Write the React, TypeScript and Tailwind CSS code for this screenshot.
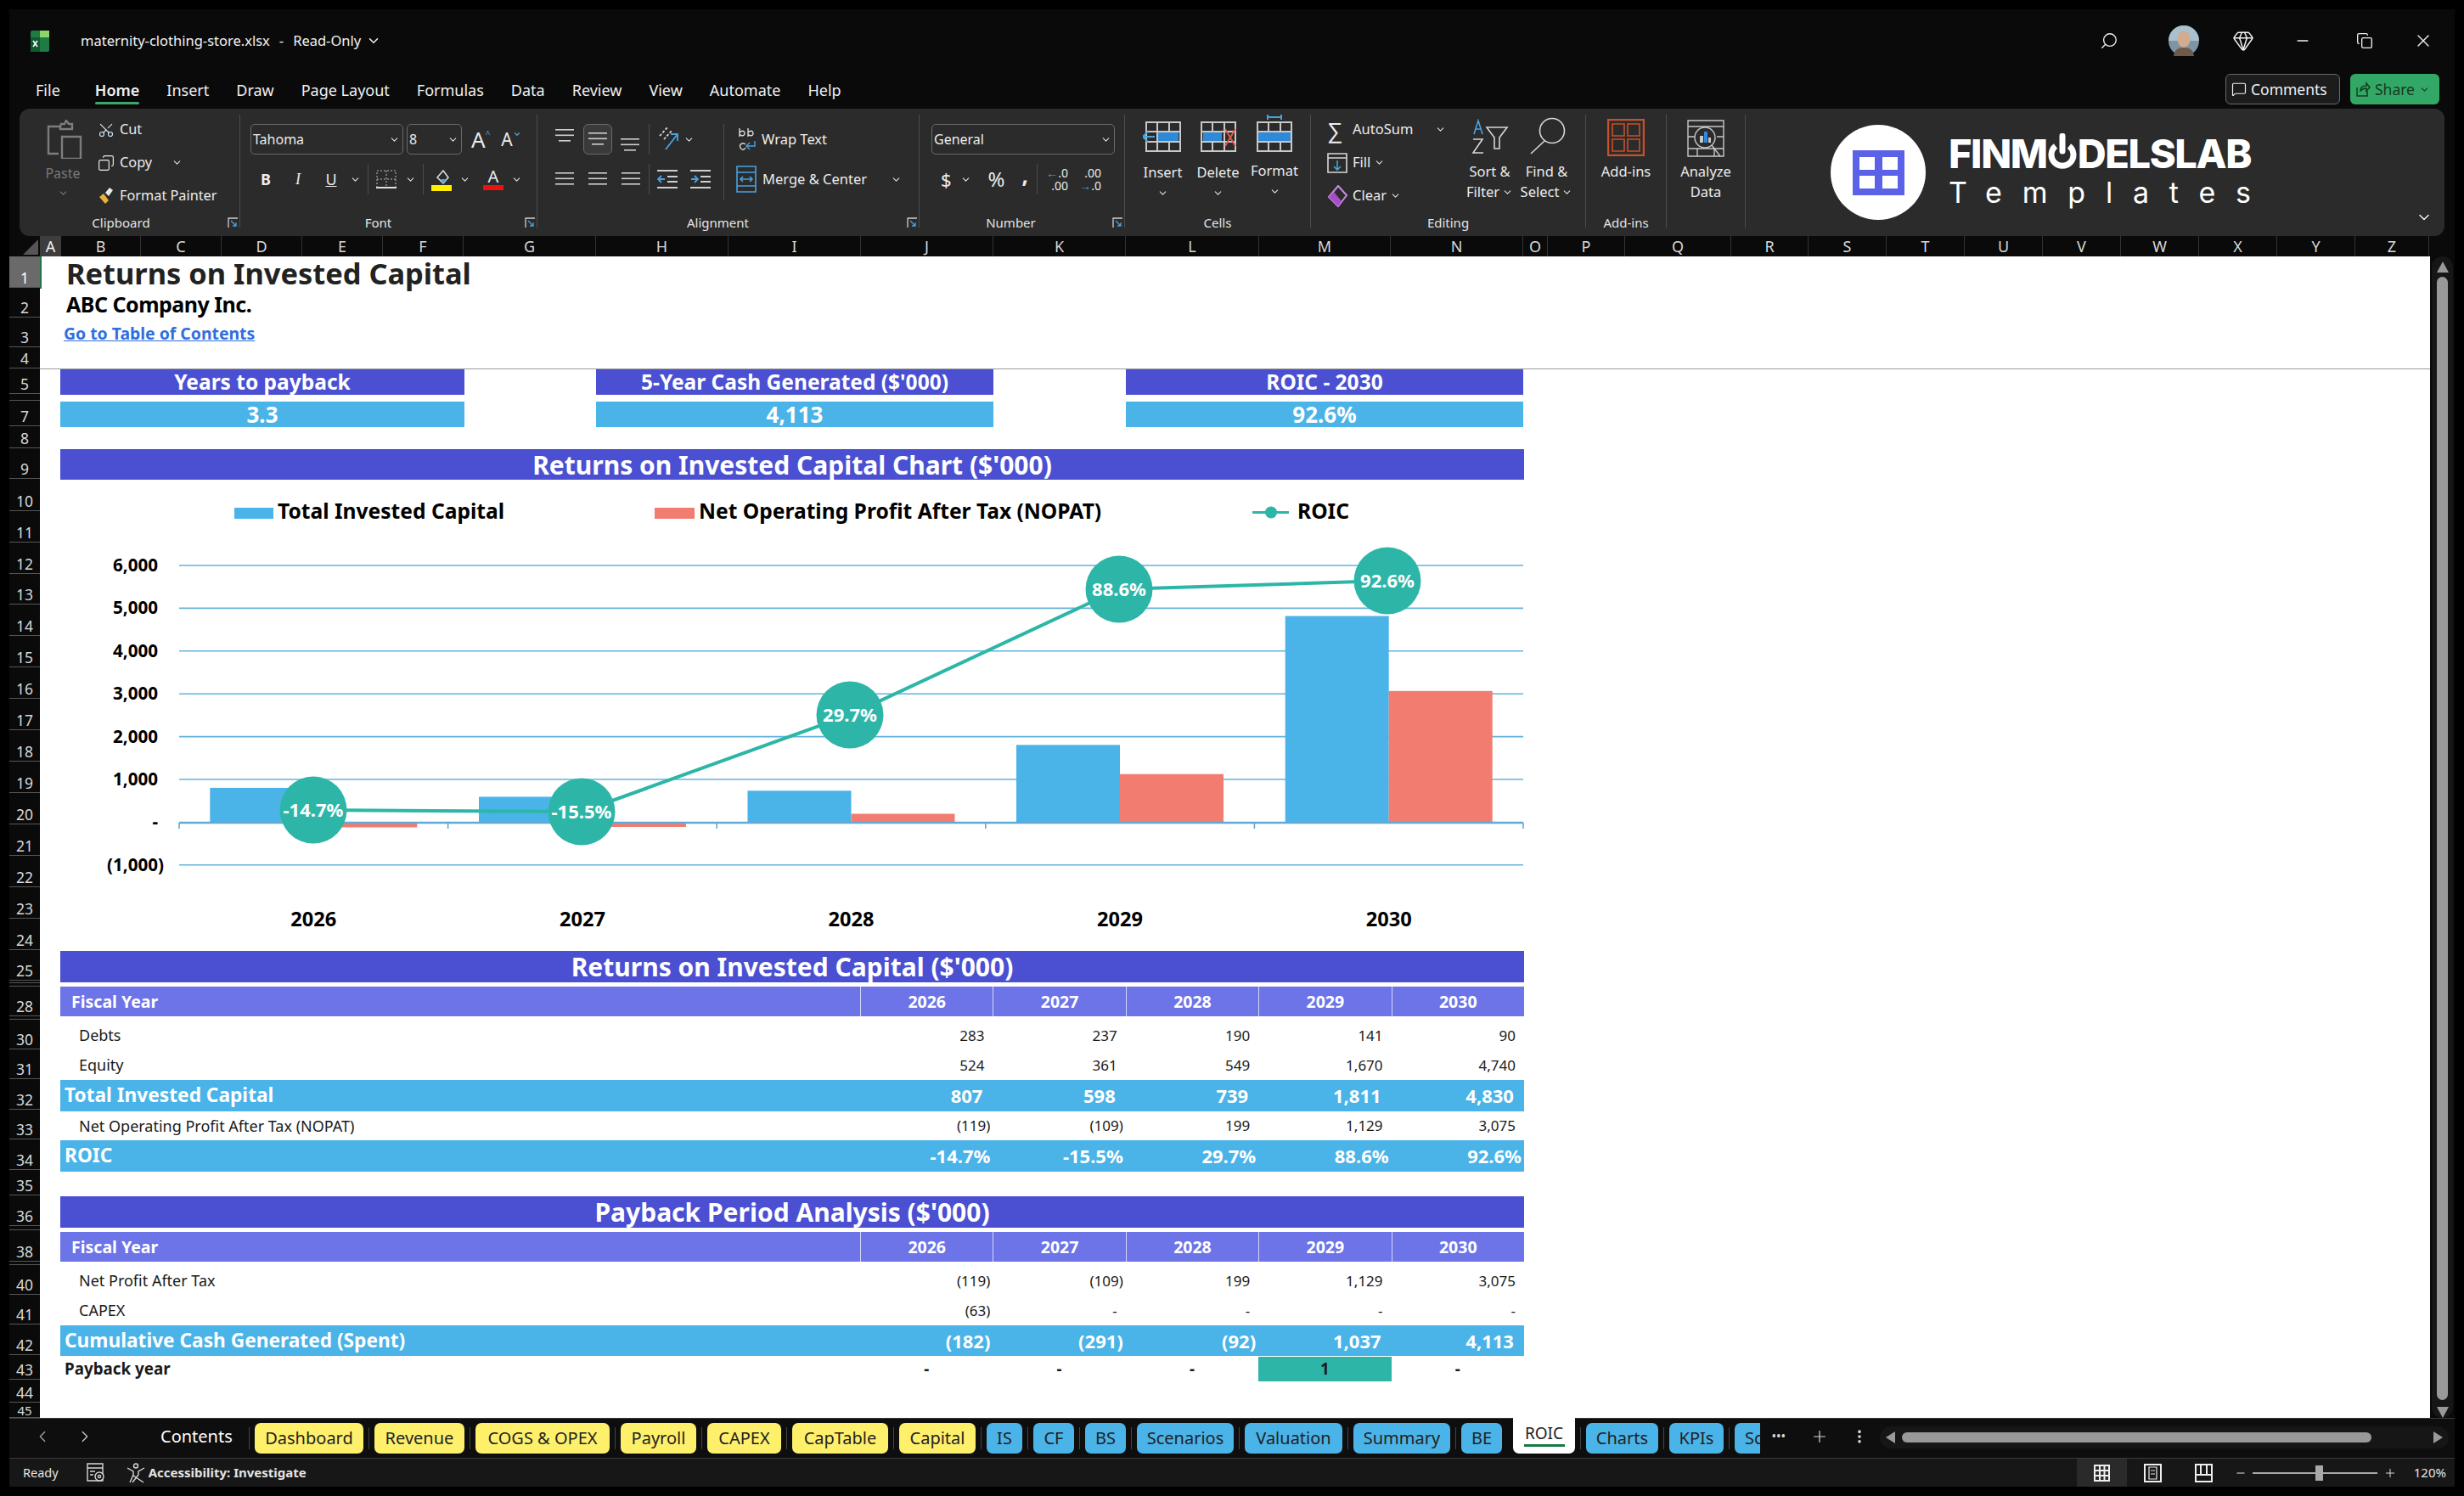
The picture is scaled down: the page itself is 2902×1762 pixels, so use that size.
import {
  ChevronDown,
  ChevronLeft,
  ChevronRight,
  Copy,
  Gem,
  MessageSquare,
  Minus,
  MoreVertical,
  Plus,
  Scissors,
  Search,
  X,
} from 'lucide-react';
import type { ReactNode } from 'react';

const rows: [string, number][] = [
  ['1', 37], ['2', 35], ['3', 35], ['4', 25], ['5', 30], ['', 8], ['7', 30], ['8', 26], ['9', 36],
  ['10', 38], ['11', 37], ['12', 37], ['13', 36], ['14', 37], ['15', 37], ['16', 37], ['17', 37],
  ['18', 37], ['19', 37], ['20', 37], ['21', 37], ['22', 37], ['23', 37], ['24', 37], ['25', 36],
  ['', 3], ['', 4], ['28', 35], ['', 4], ['30', 35], ['31', 35], ['32', 36], ['33', 35], ['34', 36],
  ['35', 30], ['36', 36], ['', 5], ['38', 37], ['', 4], ['40', 35], ['41', 35], ['42', 36], ['43', 29],
  ['44', 27], ['45', 18],
];

const cols: [string, number][] = [
  ['A', 25], ['B', 94], ['C', 95], ['D', 95], ['E', 95], ['F', 95], ['G', 156], ['H', 156], ['I', 156],
  ['J', 156], ['K', 156], ['L', 157], ['M', 155], ['N', 156], ['O', 29], ['P', 91], ['Q', 125], ['R', 91],
  ['S', 92], ['T', 92], ['U', 92], ['V', 92], ['W', 92], ['X', 92], ['Y', 92], ['Z', 87],
];

const years = ['2026', '2027', '2028', '2029', '2030'];
const centers = [369.3, 686, 1002.5, 1319, 1635.7];
const invested = [807, 598, 739, 1811, 4830];
const nopat = [-119, -109, 199, 1129, 3075];
const roic = [
  { x: 369, y: 953, label: '-14.7%' },
  { x: 685, y: 955, label: '-15.5%' },
  { x: 1001, y: 841, label: '29.7%' },
  { x: 1318, y: 693, label: '88.6%' },
  { x: 1634, y: 683, label: '92.6%' },
];
const axis = ['6,000', '5,000', '4,000', '3,000', '2,000', '1,000', '-', '(1,000)'];

const tabs: { name: string; w: number; color: string }[] = [
  { name: 'Dashboard', w: 128, color: 'y' },
  { name: 'Revenue', w: 106, color: 'y' },
  { name: 'COGS & OPEX', w: 158, color: 'y' },
  { name: 'Payroll', w: 89, color: 'y' },
  { name: 'CAPEX', w: 87, color: 'y' },
  { name: 'CapTable', w: 113, color: 'y' },
  { name: 'Capital', w: 90, color: 'y' },
  { name: 'IS', w: 42, color: 'b' },
  { name: 'CF', w: 48, color: 'b' },
  { name: 'BS', w: 48, color: 'b' },
  { name: 'Scenarios', w: 114, color: 'b' },
  { name: 'Valuation', w: 115, color: 'b' },
  { name: 'Summary', w: 114, color: 'b' },
  { name: 'BE', w: 48, color: 'b' },
];

function Chev({ className = '' }: { className?: string }) {
  return <ChevronDown size={13} strokeWidth={2} className={`shrink-0 text-[#e0e0e0] ${className}`} />;
}

function Lines({ w, className = '' }: { w: number[]; className?: string }) {
  return (
    <svg width="24" height="16" viewBox="0 0 24 16" className={className}>
      {w.map((l, i) => (
        <rect key={i} x={(24 - l) / 2} y={i * 6.5} width={l} height="1.6" fill="#cfcfcf" />
      ))}
    </svg>
  );
}

function Launcher() {
  return (
    <svg width="13" height="13" viewBox="0 0 13 13" className="absolute right-[1px] top-0" fill="none" stroke="#cfcfcf" strokeWidth="1.3">
      <path d="M1 12V1h11" />
      <path d="M4 4l6 6M6 10h4V6" stroke="#4aa3df" />
    </svg>
  );
}

function Group({ w, label, pad = '', launcher, children }: { w: string; label: string; pad?: string; launcher?: boolean; children: ReactNode }) {
  return (
    <div className={`mb-[10px] mt-[7px] flex shrink-0 flex-col border-r border-[#4d4d4d] ${w}`}>
      <div className="h-[121px]">{children}</div>
      <div className={`relative h-[12px] text-center text-[15px] leading-[12px] text-[#e4e4e4] ${pad}`}>
        {label}
        {launcher && <Launcher />}
      </div>
    </div>
  );
}

function Divider({ className = '' }: { className?: string }) {
  return <div className={`h-[36px] w-px shrink-0 bg-[#4d4d4d] ${className}`} />;
}

function Select({ text, w, className = '' }: { text: string; w: string; className?: string }) {
  return (
    <div className={`flex h-[36px] shrink-0 items-center justify-between rounded-[5px] border border-[#6a6a6a] pl-[2px] pr-[3px] text-[16px] ${w} ${className}`}>
      {text}
      <Chev />
    </div>
  );
}

function CellIcon({ children }: { children: ReactNode }) {
  return (
    <svg width="48" height="44" viewBox="0 0 48 44" fill="none" stroke="#c8c8c8" strokeWidth="2">
      <path d="M4 9h40v34H4zM4 20h40M4 32h40M17 9v34M31 9v34" />
      {children}
    </svg>
  );
}

function Big({ icon, label, second, w, h = 'h-[44px]', gap = 'mt-[12px]' }: { icon: ReactNode; label: string; second?: string; w: string; h?: string; gap?: string }) {
  return (
    <div className={`flex shrink-0 flex-col items-center text-[16.5px] ${w}`}>
      <div className={`flex items-end justify-center ${h}`}>{icon}</div>
      <div className={`h-[24px] leading-[24px] ${gap}`}>{label}</div>
      <div className="flex h-[24px] items-center gap-[3px] leading-[24px]">
        {second}
        <Chev />
      </div>
    </div>
  );
}

function TitleBar() {
  return (
    <div className="flex h-[117px] shrink-0 flex-col">
      <div className="flex h-[74px] items-center pl-[24px] pr-[25px]">
        <svg width="24" height="25" viewBox="0 0 24 25">
          <rect x="1" y="0" width="22" height="25" rx="2" fill="#1f7a44" />
          <rect x="12" y="0" width="11" height="8" fill="#8fd46a" />
          <rect x="1" y="8" width="11" height="17" fill="#0f5a30" />
          <path d="M4 12l5 7M9 12l-5 7" stroke="#fff" strokeWidth="1.6" />
        </svg>
        <div className="ml-[36px] flex items-center text-[16.5px] text-[#f2f2f2]">
          <span>maternity-clothing-store.xlsx</span>
          <span className="ml-[11px]">-</span>
          <span className="ml-[11px]">Read-Only</span>
          <ChevronDown size={18} className="ml-[6px]" />
        </div>
        <div className="flex-1" />
        <Search size={22} strokeWidth={1.5} className="-scale-x-100" />
        <svg width="36" height="36" viewBox="0 0 36 36" className="ml-[59px]">
          <circle cx="18" cy="18" r="18" fill="#7f95a6" />
          <path d="M0 18a18 18 0 0 1 36 0z" fill="#a9c0cf" />
          <ellipse cx="18" cy="16" rx="7.5" ry="10" fill="#d3ab91" />
          <path d="M6 36c1-8 6-10 12-10s11 2 12 10z" fill="#6e5a4d" />
        </svg>
        <Gem size={26} strokeWidth={1.4} className="ml-[39px]" />
        <Minus size={20} strokeWidth={1.6} className="ml-[47px]" />
        <Copy size={20} strokeWidth={1.6} className="ml-[53px]" />
        <X size={24} strokeWidth={1.4} className="ml-[47px]" />
      </div>
      <div className="flex h-[43px] items-start">
        <div className="ml-[31px] flex gap-[32px] pt-[8px] text-[18px] leading-[26px] text-[#f0f0f0]">
          <span className="mr-[9px]">File</span>
          <span className="relative font-semibold">
            Home
            <span className="absolute left-0 right-0 top-[27px] h-[3px] rounded-full bg-[#3fa66b]" />
          </span>
          <span>Insert</span>
          <span>Draw</span>
          <span>Page Layout</span>
          <span>Formulas</span>
          <span>Data</span>
          <span>Review</span>
          <span>View</span>
          <span>Automate</span>
          <span>Help</span>
        </div>
        <div className="flex-1" />
        <div className="mt-[2px] flex h-[36px] w-[135px] items-center gap-[5px] rounded-[6px] border border-[#6a6a6a] bg-[#1c1c1c] pl-[6px] text-[17.5px]">
          <MessageSquare size={18} strokeWidth={1.6} />
          Comments
        </div>
        <div className="ml-[12px] mr-[18px] mt-[2px] flex h-[36px] w-[105px] items-center gap-[5px] rounded-[6px] bg-[#33a866] pl-[6px] text-[17.5px] text-[#123d22]">
          <svg width="18" height="20" viewBox="0 0 18 20" fill="none" stroke="#123d22" strokeWidth="1.5">
            <path d="M2 8v10h12v-6M6 12c0-4 3-6 7-6V3l4 5-4 4V9c-3 0-5 1-7 3z" />
          </svg>
          Share
          <Chev className="!text-[#123d22]" />
        </div>
      </div>
    </div>
  );
}

function Ribbon() {
  return (
    <div className="mx-[12px] flex h-[150px] shrink-0 rounded-[12px] bg-[#2b2b2b] text-[#ececec]">
      <Group w="w-[260px]" label="Clipboard" pad="pr-[20px]" launcher>
        <div className="flex">
          <div className="ml-[32px] flex w-[42px] flex-col items-center pt-[6px] text-[16px] text-[#787878]">
            <svg width="42" height="46" viewBox="0 0 42 46" fill="none" stroke="#7d7d7d" strokeWidth="2.4" className="shrink-0">
              <path d="M16 8H2v32h12M16 8l1-3h4l2-4 3 4h4v6H16zM18 20h22v26H18z" />
            </svg>
            <div className="-ml-[4px] mt-[5px] leading-[24px]">Paste</div>
            <Chev className="-ml-[4px] mt-[5px] !text-[#787878]" />
          </div>
          <div className="-mt-[2px] ml-[18px] text-[16.3px]">
            <div className="flex h-[39px] items-center gap-[6px]">
              <Scissors size={20} strokeWidth={1.4} className="-rotate-90 text-[#cfe3f2]" />
              Cut
            </div>
            <div className="flex h-[39px] items-center gap-[6px]">
              <Copy size={20} strokeWidth={1.4} className="-scale-x-100" />
              Copy
              <Chev className="ml-[17px]" />
            </div>
            <div className="flex h-[39px] items-center gap-[6px]">
              <svg width="20" height="22" viewBox="0 0 20 22">
                <path d="M2 12l7 8 4-4-6-8z" fill="#e8b13c" />
                <path d="M9 7l5-6 4 3-5 7z" fill="#e8e8e8" />
              </svg>
              Format Painter
            </div>
          </div>
        </div>
      </Group>

      <Group w="w-[350px]" label="Font" pad="pr-[24px]" launcher>
        <div className="ml-[12px] flex items-center pt-[11px]">
          <Select text="Tahoma" w="w-[180px]" />
          <Select text="8" w="w-[65px]" className="ml-[4px]" />
          <span className="ml-[11px] text-[26px] leading-[36px]">A</span>
          <span className="mb-[12px] text-[10px] leading-[10px] text-[#4aa3df]">^</span>
          <span className="ml-[13px] text-[21px] leading-[36px]">A</span>
          <ChevronDown size={10} strokeWidth={3} className="mb-[12px] text-[#4aa3df]" />
        </div>
        <div className="ml-[24px] mt-[11px] flex h-[36px] items-center text-[18px]">
          <span className="w-[12px] text-center font-bold">B</span>
          <span className="ml-[26px] w-[12px] text-center font-['Liberation_Serif',serif] italic">I</span>
          <span className="ml-[26px] w-[14px] text-center underline">U</span>
          <Chev className="ml-[15px]" />
          <Divider className="ml-[8px]" />
          <svg width="24" height="22" viewBox="0 0 24 22" className="ml-[9px]" fill="none" stroke="#bdbdbd" strokeWidth="1" strokeDasharray="2 2">
            <path d="M1 1h22v20H1zM12 1v20M1 11h22" />
            <path d="M0 21h24" strokeDasharray="none" strokeWidth="2" stroke="#e0e0e0" />
          </svg>
          <Chev className="ml-[10px]" />
          <Divider className="ml-[8px]" />
          <svg width="24" height="28" viewBox="0 0 24 28" className="ml-[9px]">
            <path d="M7 12l7-8 6 8-6 7z" fill="none" stroke="#e0e0e0" strokeWidth="1.5" />
            <path d="M10 14h8l-4 5z" fill="#4aa3df" />
            <rect y="21" width="24" height="7" fill="#ffee00" />
          </svg>
          <Chev className="ml-[9px]" />
          <div className="ml-[15px] flex w-[24px] flex-col items-center">
            <span className="text-[20px] leading-[20px]">A</span>
            <span className="h-[6px] w-[24px] bg-[#ee1111]" />
          </div>
          <Chev className="ml-[9px]" />
        </div>
      </Group>

      <Group w="w-[450px]" label="Alignment" pad="pr-[24px]" launcher>
        <div className="ml-[8px] mt-[11px] flex h-[36px] items-start">
          <Lines w={[22, 22, 14]} className="ml-[12px] mt-[6px]" />
          <div className="ml-[10px] flex h-[36px] w-[34px] items-center justify-center rounded-[6px] border border-[#6a6a6a] bg-[#3a3a3a]">
            <Lines w={[22, 22, 14]} />
          </div>
          <Lines w={[22, 22, 14]} className="ml-[9px] mt-[17px]" />
          <Divider className="ml-[10px]" />
          <svg width="26" height="34" viewBox="0 0 26 34" className="ml-[9px]" fill="none" strokeWidth="1.8">
            <path d="M3 14L13 3M8 18L17 8" stroke="#d8d8d8" strokeDasharray="3 2" />
            <path d="M10 30L24 12M16 12h8v8" stroke="#4aa3df" />
          </svg>
          <Chev className="ml-[5px] mt-[12px]" />
          <Divider className="ml-[34px] !h-[90px]" />
          <div className="ml-[16px] mt-[2px] flex items-center gap-[6px] text-[16.5px]">
            <svg width="22" height="32" viewBox="0 0 22 32" fill="none" stroke="#d8d8d8" strokeWidth="1.4">
              <path d="M2 3v10M2 8c3-3 6-2 6 1s-4 4-6 1M12 3v10M12 8c3-3 6-2 6 1s-4 4-6 1M9 22c-3-3-8 0-6 4s5 2 6 0" />
              <path d="M20 18v6h-9M14 20l-4 4 4 4" stroke="#4aa3df" />
            </svg>
            Wrap Text
          </div>
        </div>
        <div className="ml-[20px] mt-[11px] flex h-[36px] items-center">
          <Lines w={[22, 22, 22]} />
          <Lines w={[22, 22, 22]} className="ml-[15px]" />
          <Lines w={[22, 22, 22]} className="ml-[15px]" />
          <Divider className="ml-[9px]" />
          <svg width="24" height="22" viewBox="0 0 24 22" className="ml-[9px]" fill="none" strokeWidth="1.8">
            <path d="M0 1h24M12 8h12M12 14h12M0 21h24" stroke="#cfcfcf" />
            <path d="M9 11H1M5 7l-4 4 4 4" stroke="#4aa3df" />
          </svg>
          <svg width="24" height="22" viewBox="0 0 24 22" className="ml-[15px]" fill="none" strokeWidth="1.8">
            <path d="M0 1h24M12 8h12M12 14h12M0 21h24" stroke="#cfcfcf" />
            <path d="M1 11h8M5 7l4 4-4 4" stroke="#4aa3df" />
          </svg>
          <div className="ml-[30px] flex items-center gap-[7px] text-[16.5px]">
            <svg width="24" height="32" viewBox="0 0 24 32" fill="none" stroke="#4aa3df" strokeWidth="1.6">
              <path d="M1 1h22v30H1zM1 8h22M1 24h22" />
              <path d="M5 16h14M8 13l-3 3 3 3M16 13l3 3-3 3" />
            </svg>
            Merge &amp; Center
            <Chev className="ml-[21px]" />
          </div>
        </div>
      </Group>

      <Group w="w-[242px]" label="Number" pad="pr-[26px]" launcher>
        <Select text="General" w="w-[216px]" className="ml-[14px] mt-[11px]" />
        <div className="ml-[25px] mt-[11px] flex h-[36px] items-center">
          <span className="text-[22px] leading-[36px]">$</span>
          <Chev className="ml-[10px]" />
          <span className="ml-[20px] text-[24px] leading-[36px]">%</span>
          <span className="-mt-[10px] ml-[20px] text-[26px] font-bold leading-[36px]">,</span>
          <Divider className="ml-[10px]" />
          <div className="ml-[6px] w-[30px] text-right text-[14px] leading-[15px]">
            <div><span className="text-[#4aa3df]">←</span>.0</div>
            <div>.00</div>
          </div>
          <div className="ml-[9px] w-[30px] text-right text-[14px] leading-[15px]">
            <div>.00</div>
            <div><span className="text-[#4aa3df]">→</span>.0</div>
          </div>
        </div>
      </Group>

      <Group w="w-[219px]" label="Cells">
        <div className="ml-[12px] flex">
          <Big
            w="w-[65px]"
            label="Insert"
            icon={
              <CellIcon>
                <rect x="18" y="21" width="24" height="10" fill="#2e8ad8" stroke="none" />
                <path d="M14 26H0M6 20l-6 6 6 6" stroke="#4aa3df" />
              </CellIcon>
            }
          />
          <Big
            w="w-[65px]"
            label="Delete"
            icon={
              <CellIcon>
                <rect x="6" y="21" width="22" height="10" fill="#2e8ad8" stroke="none" />
                <path d="M32 17l12 20M44 17L32 37" stroke="#e5564b" />
              </CellIcon>
            }
          />
          <Big
            w="w-[68px]"
            label="Format"
            gap="mt-[10px]"
            icon={
              <CellIcon>
                <rect x="5" y="21" width="38" height="10" fill="#2e8ad8" stroke="none" />
                <path d="M16 3h16M16 0v6M32 0v6" stroke="#4aa3df" />
              </CellIcon>
            }
          />
        </div>
      </Group>

      <Group w="w-[324px]" label="Editing">
        <div className="flex">
          <div className="-mt-[2px] ml-[19px] w-[161px] text-[16.5px]">
            <div className="flex h-[39px] items-center">
              <span className="w-[30px] text-[26px] leading-[30px]">∑</span>
              AutoSum
              <Chev className="ml-[26px]" />
            </div>
            <div className="flex h-[39px] items-center">
              <svg width="24" height="24" viewBox="0 0 24 24" className="mr-[6px]" fill="none" stroke="#d8d8d8" strokeWidth="1.6">
                <path d="M1 1h22v22H1zM1 6h22" />
                <path d="M12 9v11M8 16l4 4 4-4" stroke="#4aa3df" />
              </svg>
              Fill
              <Chev className="ml-[4px]" />
            </div>
            <div className="flex h-[39px] items-center">
              <svg width="24" height="26" viewBox="0 0 24 26" className="mr-[6px]">
                <path d="M13 1l10 11-10 13L2 14z" fill="none" stroke="#c98be0" strokeWidth="2" />
                <path d="M2 14l6-6 9 11-4 6z" fill="#a64dc9" />
              </svg>
              Clear
              <Chev className="ml-[4px]" />
            </div>
          </div>
          <Big
            w="w-[61px]"
            label="Sort &"
            second="Filter"
            h="h-[47px]"
            gap="mt-[8px]"
            icon={
              <svg width="44" height="42" viewBox="0 0 44 42" fill="none" strokeWidth="1.6">
                <path d="M3 18L8 2l5 16M5 12h6" stroke="#4aa3df" />
                <path d="M2 24h11L2 40h12" stroke="#d8d8d8" />
                <path d="M18 10h24l-9 12v13h-6V22z" stroke="#d8d8d8" />
              </svg>
            }
          />
          <Big
            w="w-[73px]"
            label="Find &"
            second="Select"
            h="h-[47px]"
            gap="mt-[8px]"
            icon={
              <svg width="44" height="44" viewBox="0 0 44 44" fill="none" stroke="#d8d8d8" strokeWidth="1.6">
                <circle cx="28" cy="16" r="14.5" />
                <path d="M19 28L3 43" />
              </svg>
            }
          />
        </div>
      </Group>

      <Group w="w-[95px]" label="Add-ins">
        <div className="flex flex-col items-center text-[16.5px]">
          <svg width="44" height="44" viewBox="0 0 44 44" fill="none" stroke="#c8502a" strokeWidth="2.4" className="mt-[5px]">
            <path d="M1 1h42v42H1z" />
            <path d="M6 6h14v14H6zM24 6h14v14H24zM6 24h14v14H6zM24 24h14v14H24z" strokeWidth="1.6" />
          </svg>
          <div className="mt-[6px] leading-[24px]">Add-ins</div>
        </div>
      </Group>

      <Group w="w-[93px]" label="">
        <div className="flex flex-col items-center text-[16.5px] leading-[24px]">
          <svg width="44" height="44" viewBox="0 0 44 44" fill="none" stroke="#c8c8c8" strokeWidth="1.4" className="mt-[6px]">
            <path d="M1 1h42v42H1zM1 8h42M1 20h8M35 20h8M1 34h42M12 34v9M32 34v9" />
            <circle cx="21" cy="21" r="12" fill="#2b2b2b" />
            <path d="M29 30l10 13" />
            <rect x="15" y="19" width="4" height="8" fill="#c8c8c8" stroke="none" />
            <rect x="20" y="14" width="4" height="13" fill="#2e8ad8" stroke="none" />
            <rect x="25" y="21" width="3" height="6" fill="#c8c8c8" stroke="none" />
          </svg>
          <div className="mt-[5px]">Analyze</div>
          <div>Data</div>
        </div>
      </Group>

      <div className="relative flex flex-1 items-center pl-[100px] text-white">
        <div className="flex h-[112px] w-[112px] items-center justify-center rounded-full bg-white">
          <div className="grid h-[53px] w-[61px] grid-cols-[18px_18px] place-content-center gap-x-[9px] gap-y-[7px] bg-[#5b62e8]">
            <span className="h-[15px] w-[18px] bg-white" />
            <span className="h-[15px] w-[18px] bg-white" />
            <span className="h-[15px] w-[18px] bg-white" />
            <span className="h-[15px] w-[18px] bg-white" />
          </div>
        </div>
        <div className="ml-[27px] font-['Inter',sans-serif]">
          <div className="flex h-[44px] items-center text-[47px] font-extrabold leading-[44px] tracking-[-1.4px]">
            FINM
            <svg width="34" height="42" viewBox="0 0 34 42" className="mx-[1px] mt-[-6px] shrink-0" fill="none" stroke="#fff" strokeWidth="7">
              <path d="M9 15a13 13 0 1 0 16 0" />
              <path d="M17 3v18" strokeLinecap="round" />
            </svg>
            DELSLAB
          </div>
          <div className="mt-[4px] text-[34px] leading-[40px] tracking-[23.8px]">Templates</div>
        </div>
        <ChevronDown size={20} strokeWidth={1.6} className="absolute bottom-[12px] right-[14px]" />
      </div>
    </div>
  );
}

function ColumnHeader() {
  return (
    <div className="flex h-[24px] shrink-0 bg-[#0a0a0a]">
      <div className="flex w-[36px] justify-end pr-[2px]">
        <div className="mt-[4px] h-0 w-0 border-b-[18px] border-l-[18px] border-b-[#555] border-l-transparent" />
      </div>
      {cols.map(([c, w], i) => (
        <div
          key={c}
          style={{ width: w }}
          className={
            i === 0
              ? 'flex shrink-0 items-center justify-center bg-[#3d3d3d] text-[18px] text-[#f0f0f0]'
              : 'flex shrink-0 items-center justify-center border-r border-[#333] text-[18px] text-[#d8d8d8]'
          }
        >
          {c}
        </div>
      ))}
    </div>
  );
}

function RowHeader() {
  return (
    <div className="flex w-[36px] shrink-0 flex-col bg-[#0a0a0a]">
      {rows.map(([r, h], i) => (
        <div
          key={i}
          style={{ height: h }}
          className={
            i === 0
              ? 'flex shrink-0 items-end justify-center overflow-hidden border-b border-[#555] bg-[#6a6a6a] text-[17.5px] leading-[22px] text-white'
              : h < 20
                ? 'flex shrink-0 items-end justify-center overflow-hidden border-b border-[#555] text-[15px] leading-[16px] text-[#d8d8d8]'
                : 'flex shrink-0 items-end justify-center overflow-hidden border-b border-[#555] text-[17.5px] leading-[22px] text-[#d8d8d8]'
          }
        >
          {r}
        </div>
      ))}
    </div>
  );
}

function Kpi({ title, value, className = '' }: { title: string; value: string; className?: string }) {
  return (
    <div className={`text-center font-bold text-white ${className}`}>
      <div className="flex h-[30px] items-center justify-center bg-[#4b50d2] text-[24.5px]">{title}</div>
      <div className="mt-[8px] flex h-[30px] items-center justify-center bg-[#4ab3e8] text-[26px]">{value}</div>
    </div>
  );
}

function Banner({ children, className = '' }: { children: ReactNode; className?: string }) {
  return (
    <div className={`flex h-[37px] items-center justify-center bg-[#4b50d2] text-[30px] font-bold text-white ${className}`}>
      {children}
    </div>
  );
}

function YearRow() {
  return (
    <div className="mt-[5px] grid h-[35px] grid-cols-[942px_repeat(5,156.4px)] items-stretch bg-[#6d74e8] text-[19.5px] font-bold text-white">
      <div className="flex items-center pl-[13px]">Fiscal Year</div>
      {years.map((y) => (
        <div key={y} className="flex items-center justify-center border-l border-[#d5d7f7]">
          {y}
        </div>
      ))}
    </div>
  );
}

function Row({ label, values, h }: { label: string; values: string[]; h: string }) {
  return (
    <div className={`grid grid-cols-[942px_repeat(5,156.4px)] items-center text-[17px] text-[#1a1a1a] ${h}`}>
      <div className="pl-[22px] text-[18px]">{label}</div>
      {values.map((v, i) => (
        <div key={i} className={v.endsWith(')') ? 'pr-[3px] text-right' : 'pr-[10px] text-right'}>
          {v}
        </div>
      ))}
    </div>
  );
}

function Band({ label, values, h }: { label: string; values: string[]; h: string }) {
  return (
    <div className={`grid grid-cols-[942px_repeat(5,156.4px)] items-center bg-[#4ab3e8] text-[22px] font-bold text-white ${h}`}>
      <div className="pl-[5px] text-[22.7px]">{label}</div>
      {values.map((v, i) => (
        <div key={i} className={v.endsWith(')') || v.endsWith('%') ? 'pr-[3px] text-right' : 'pr-[12px] text-right'}>
          {v}
        </div>
      ))}
    </div>
  );
}

function Chart() {
  const zero = 967.5;
  const y = (v: number) => (v / 1000) * 50.3;
  return (
    <svg viewBox="47 564 1753 555" className="-ml-[24px] block h-[555px] w-[1753px]" fontFamily="'Noto Sans', sans-serif" fontWeight="700">
      <rect x="276" y="597" width="46" height="13" fill="#4ab3e8" />
      <text x="327" y="610" fontSize="24.6">Total Invested Capital</text>
      <rect x="771" y="597" width="47" height="13" fill="#f27c70" />
      <text x="823" y="610" fontSize="24.6">Net Operating Profit After Tax (NOPAT)</text>
      <path d="M1475 602.5h43" stroke="#2db6a8" strokeWidth="3" />
      <circle cx="1497" cy="602.5" r="7" fill="#2db6a8" />
      <text x="1528" y="610" fontSize="24.6">ROIC</text>

      {axis.map((a, i) => {
        const yy = 665 + i * 50.4;
        return (
          <g key={a}>
            {a !== '-' && <path d={`M211 ${yy}H1794`} stroke="#63b3dc" strokeWidth="1.6" />}
            <text x={a === '(1,000)' ? 193 : 186} y={yy + 7} fontSize="20.6" textAnchor="end">
              {a}
            </text>
          </g>
        );
      })}

      {centers.map((c, i) => (
        <g key={c}>
          <rect x={c - 122} y={zero - y(invested[i])} width="122" height={y(invested[i])} fill="#4ab3e8" />
          <rect
            x={c}
            y={nopat[i] < 0 ? zero : zero - y(nopat[i])}
            width="122"
            height={Math.abs(y(nopat[i]))}
            fill="#f27c70"
          />
          <text x={c} y="1090" fontSize="23.6" textAnchor="middle">
            {years[i]}
          </text>
        </g>
      ))}

      <path d="M211 968H1794" stroke="#63a9d6" strokeWidth="2.4" />
      {[211, 527.6, 844.2, 1160.8, 1477.4, 1794].map((t) => (
        <path key={t} d={`M${t} 968v7`} stroke="#63a9d6" strokeWidth="1.6" />
      ))}

      <polyline points={roic.map((p) => `${p.x},${p.y}`).join(' ')} fill="none" stroke="#2db6a8" strokeWidth="4" />
      {roic.map((p) => (
        <g key={p.label}>
          <circle cx={p.x} cy={p.y} r="39.5" fill="#2db6a8" />
          <text x={p.x} y={p.y + 8} fontSize="22" fill="#fff" textAnchor="middle">
            {p.label}
          </text>
        </g>
      ))}
    </svg>
  );
}

function Sheet() {
  return (
    <div className="relative h-[1368px] flex-1 overflow-hidden bg-white text-[#1a1a1a]">
      <span className="absolute left-0 top-0 h-[38px] w-[2px] bg-[#217346]" />
      <div className="h-[132px] pl-[31px]">
        <div className="h-[38px] text-[34.4px] font-bold leading-[40px] text-[#222]">Returns on Invested Capital</div>
        <div className="h-[35px] text-[25px] font-bold leading-[37px] tracking-[-0.5px] text-black">ABC Company Inc.</div>
        <div className="-ml-[3px] h-[35px] text-[19.4px] font-bold leading-[36px] text-[#2f6fe0] underline">Go to Table of Contents</div>
      </div>
      <div className="h-px w-full bg-[#9a9a9a]" />
      <div className="w-[1748px] pl-[24px]">
        <div className="flex">
          <Kpi title="Years to payback" value="3.3" className="w-[476px]" />
          <Kpi title="5-Year Cash Generated ($'000)" value="4,113" className="ml-[155px] w-[468px]" />
          <Kpi title="ROIC - 2030" value="92.6%" className="ml-[156px] w-[468px]" />
        </div>
        <Banner className="mt-[26px] !h-[36px]">Returns on Invested Capital Chart ($&apos;000)</Banner>
        <Chart />
        <Banner>Returns on Invested Capital ($&apos;000)</Banner>
        <YearRow />
        <Row label="Debts" values={['283', '237', '190', '141', '90']} h="mt-[5px] h-[35px]" />
        <Row label="Equity" values={['524', '361', '549', '1,670', '4,740']} h="h-[35px]" />
        <Band label="Total Invested Capital" values={['807', '598', '739', '1,811', '4,830']} h="h-[37px]" />
        <Row label="Net Operating Profit After Tax (NOPAT)" values={['(119)', '(109)', '199', '1,129', '3,075']} h="h-[34px]" />
        <Band label="ROIC" values={['-14.7%', '-15.5%', '29.7%', '88.6%', '92.6%']} h="h-[37px]" />
        <Banner className="mt-[29px]">Payback Period Analysis ($&apos;000)</Banner>
        <YearRow />
        <Row label="Net Profit After Tax" values={['(119)', '(109)', '199', '1,129', '3,075']} h="mt-[5px] h-[35px]" />
        <Row label="CAPEX" values={['(63)', '-', '-', '-', '-']} h="h-[35px]" />
        <Band label="Cumulative Cash Generated (Spent)" values={['(182)', '(291)', '(92)', '1,037', '4,113']} h="h-[36px]" />
        <div className="mt-px grid h-[29px] grid-cols-[942px_repeat(5,156.4px)] items-center text-[18.8px] font-bold">
          <div className="pl-[5px]">Payback year</div>
          {['-', '-', '-', '1', '-'].map((v, i) => (
            <div key={i} className={i === 3 ? 'flex h-full items-center justify-center bg-[#2db6a8]' : 'text-center'}>
              {v}
            </div>
          ))}
        </div>
      </div>
    </div>
  );
}

function Scrollbar() {
  return (
    <div className="mx-[2px] flex w-[25px] shrink-0 flex-col items-center rounded-full bg-[#161616]">
      <div className="mt-[6px] h-0 w-0 border-x-[7px] border-b-[13px] border-x-transparent border-b-[#999]" />
      <div className="mt-[5px] h-[1335px] w-[13px] rounded-full bg-[#999]" />
      <div className="mt-[8px] h-0 w-0 border-x-[7px] border-t-[13px] border-x-transparent border-t-[#999]" />
    </div>
  );
}

function TabBar() {
  return (
    <div className="flex h-[48px] shrink-0 items-start border-y border-y-[#3a3a3a] bg-[#0e0e0e] pr-[7px] text-[20px] text-[#222]">
      <div className="flex h-[41px] w-[282px] shrink-0 items-center text-[#a8a8a8]">
        <ChevronLeft size={22} strokeWidth={1.3} className="ml-[28px]" />
        <ChevronRight size={22} strokeWidth={1.3} className="ml-[28px] text-[#d0d0d0]" />
        <span className="ml-[78px] text-[20px] text-white">Contents</span>
      </div>
      <div className="mt-[5px] flex h-[36px] items-center">
        {tabs.map((t) => (
          <div key={t.name} className="flex h-[36px] items-center">
            <div className="mr-[6px] h-[26px] w-px bg-[#444]" />
            <div
              style={{ width: t.w }}
              className={
                t.color === 'y'
                  ? 'flex h-[36px] items-center justify-center rounded-[7px] bg-[#fff06b]'
                  : 'flex h-[36px] items-center justify-center rounded-[7px] bg-[#4ab3e8]'
              }
            >
              {t.name}
            </div>
            <div className="w-[6px]" />
          </div>
        ))}
      </div>
      <div className="-mt-px ml-[7px] flex h-[42px] w-[73px] shrink-0 flex-col items-center justify-center rounded-b-[7px] bg-white pb-[3px]">
        <span className="text-[19px] leading-[25px]">ROIC</span>
        <span className="h-[3px] w-[48px] bg-[#157a46]" />
      </div>
      <div className="ml-[6px] mt-[5px] flex h-[36px] items-center gap-[6px]">
        <div className="h-[26px] w-px bg-[#444]" />
        <div className="flex h-[36px] w-[85px] items-center justify-center rounded-[7px] bg-[#4ab3e8]">Charts</div>
        <div className="h-[26px] w-px bg-[#444]" />
        <div className="flex h-[36px] w-[64px] items-center justify-center rounded-[7px] bg-[#4ab3e8]">KPIs</div>
        <div className="h-[26px] w-px bg-[#444]" />
        <div className="flex h-[36px] w-[30px] items-center overflow-hidden rounded-l-[7px] bg-[#4ab3e8] pl-[12px]">Sc</div>
      </div>
      <div className="flex h-[41px] shrink-0 items-center text-[#d8d8d8]">
        <span className="ml-[14px] text-[12px] font-bold tracking-[1px]">•••</span>
        <Plus size={22} strokeWidth={1.3} className="ml-[28px]" />
        <MoreVertical size={20} strokeWidth={2.4} className="ml-[26px]" />
      </div>
      <div className="ml-[14px] mt-[9px] flex h-[26px] flex-1 items-center rounded-full bg-[#161616] pl-[7px] pr-[7px]">
        <div className="h-0 w-0 border-y-[7px] border-r-[11px] border-y-transparent border-r-[#999]" />
        <div className="ml-[8px] h-[12px] w-[553px] rounded-full bg-[#999]" />
        <div className="flex-1" />
        <div className="h-0 w-0 border-y-[7px] border-l-[11px] border-y-transparent border-l-[#999]" />
      </div>
    </div>
  );
}

function StatusBar() {
  return (
    <div className="flex h-[33px] shrink-0 items-center bg-[#171717] pl-[16px] text-[14.5px] text-[#e4e4e4]">
      <span>Ready</span>
      <svg width="22" height="24" viewBox="0 0 22 24" className="ml-[33px]" fill="none" stroke="#d8d8d8" strokeWidth="1.4">
        <path d="M1 1h18v20H1zM1 6h18M4 10h6M4 14h4" />
        <circle cx="15" cy="16" r="5" fill="#171717" />
        <circle cx="15" cy="16" r="1.6" />
      </svg>
      <svg width="24" height="24" viewBox="0 0 24 24" className="ml-[24px]" fill="none" stroke="#d8d8d8" strokeWidth="1.4">
        <circle cx="12" cy="3.5" r="2.5" />
        <path d="M2 6l7 4v4l-4 9M22 6l-7 4v4M9 15l12 8M15 14L8 23" />
      </svg>
      <span className="ml-[3px] text-[15px] font-bold">Accessibility: Investigate</span>
      <div className="flex-1" />
      <div className="flex h-full w-[59px] items-center justify-center bg-[#2a2a2a]">
        <svg width="19" height="20" viewBox="0 0 19 20" fill="none" stroke="#eee" strokeWidth="2">
          <path d="M1 1h17v18H1zM7 1v18M12.5 1v18M1 7h17M1 13h17" />
        </svg>
      </div>
      <svg width="21" height="22" viewBox="0 0 21 22" className="ml-[20px]" fill="none" stroke="#eee" strokeWidth="2">
        <path d="M1 1h19v20H1z" />
        <path d="M6 4h9v14H6zM8 8h5M8 12h5" strokeWidth="1.2" />
      </svg>
      <svg width="21" height="22" viewBox="0 0 21 22" className="ml-[39px]" fill="none" stroke="#eee" strokeWidth="2">
        <path d="M1 1h19v20H1zM7 1v12M14 1v12M1 13h19" />
      </svg>
      <Minus size={14} className="ml-[26px]" />
      <div className="relative ml-[7px] h-[2px] w-[147px] bg-[#a8a8a8]">
        <div className="absolute left-[74px] top-[-8px] h-[18px] w-[9px] bg-[#a8a8a8]" />
      </div>
      <Plus size={16} strokeWidth={1.4} className="ml-[7px]" />
      <span className="ml-[20px] mr-[10px] text-[15px]">120%</span>
    </div>
  );
}

export default function App() {
  return (
    <div className="h-[1762px] w-[2902px] overflow-hidden bg-black p-[11px] font-['Noto_Sans',sans-serif] text-[#f0f0f0]">
      <div className="flex h-[1740px] flex-col bg-[#0a0a0a]">
        <TitleBar />
        <Ribbon />
        <ColumnHeader />
        <div className="flex h-[1368px] shrink-0">
          <RowHeader />
          <Sheet />
          <Scrollbar />
        </div>
        <TabBar />
        <StatusBar />
      </div>
    </div>
  );
}
